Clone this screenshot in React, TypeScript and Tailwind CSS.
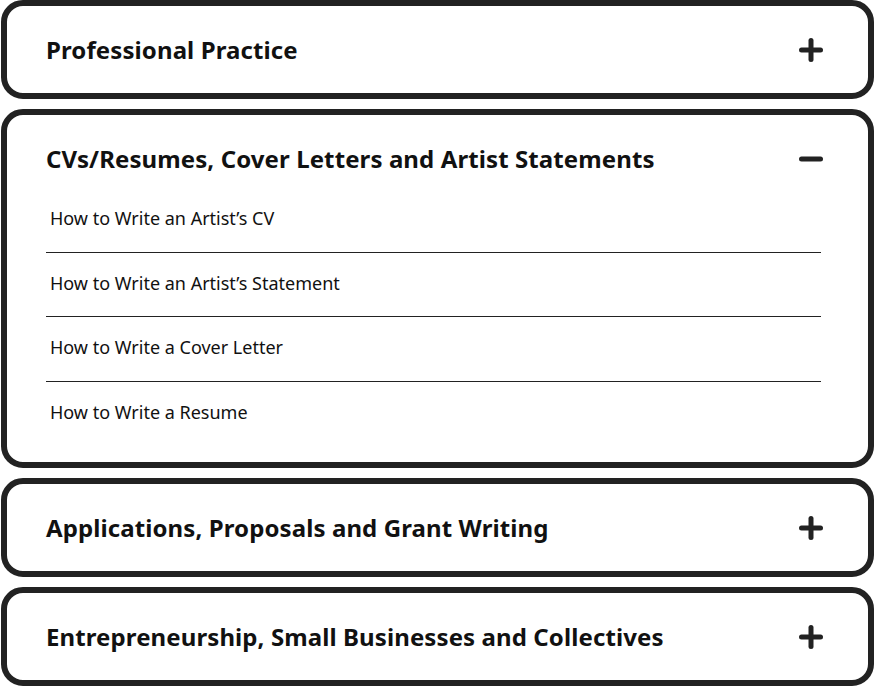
import { useState } from "react";

type Section = { title: string; items: string[] };

const SECTIONS: Section[] = [
  { title: "Professional Practice", items: [] },
  {
    title: "CVs/Resumes, Cover Letters and Artist Statements",
    items: [
      "How to Write an Artist’s CV",
      "How to Write an Artist’s Statement",
      "How to Write a Cover Letter",
      "How to Write a Resume",
    ],
  },
  { title: "Applications, Proposals and Grant Writing", items: [] },
  { title: "Entrepreneurship, Small Businesses and Collectives", items: [] },
];

function Icon({ open }: { open: boolean }) {
  return (
    <svg width="24" height="24" viewBox="0 0 24 24" className="shrink-0">
      <line x1="2.5" y1="12" x2="21.5" y2="12" stroke="#222" strokeWidth="5" strokeLinecap="round" />
      {!open && <line x1="12" y1="2.5" x2="12" y2="21.5" stroke="#222" strokeWidth="5" strokeLinecap="round" />}
    </svg>
  );
}

export default function App() {
  const [open, setOpen] = useState<number | null>(1);
  return (
    <div
      className="flex flex-col gap-[10px] bg-white px-px text-[#111]"
      style={{ fontFamily: '"Noto Sans", "Open Sans", sans-serif' }}
    >
      {SECTIONS.map((s, i) => {
        const isOpen = open === i;
        return (
          <div
            key={s.title}
            className={`rounded-[22px] border-[6px] border-[#222] bg-white pl-[39px] pr-[45px] pt-[28px] ${isOpen ? "pb-[19px]" : "pb-[27px]"}`}
          >
            <button
              onClick={() => setOpen(isOpen ? null : i)}
              className="flex w-full items-center justify-between text-left"
            >
              <span className="text-[24px] font-bold leading-[32px] tracking-[0.1px]">{s.title}</span>
              <Icon open={isOpen} />
            </button>
            {isOpen && (
              <ul className="mt-[13px] mr-[2px]">
                {s.items.map((it, j) => (
                  <li
                    key={it}
                    className={`pl-[4px] pt-[18px] text-[18px] leading-[25.5px] ${j < s.items.length - 1 ? "border-b border-[#222] pb-[20px]" : "pb-[18px]"}`}
                  >
                    {it}
                  </li>
                ))}
              </ul>
            )}
          </div>
        );
      })}
    </div>
  );
}
